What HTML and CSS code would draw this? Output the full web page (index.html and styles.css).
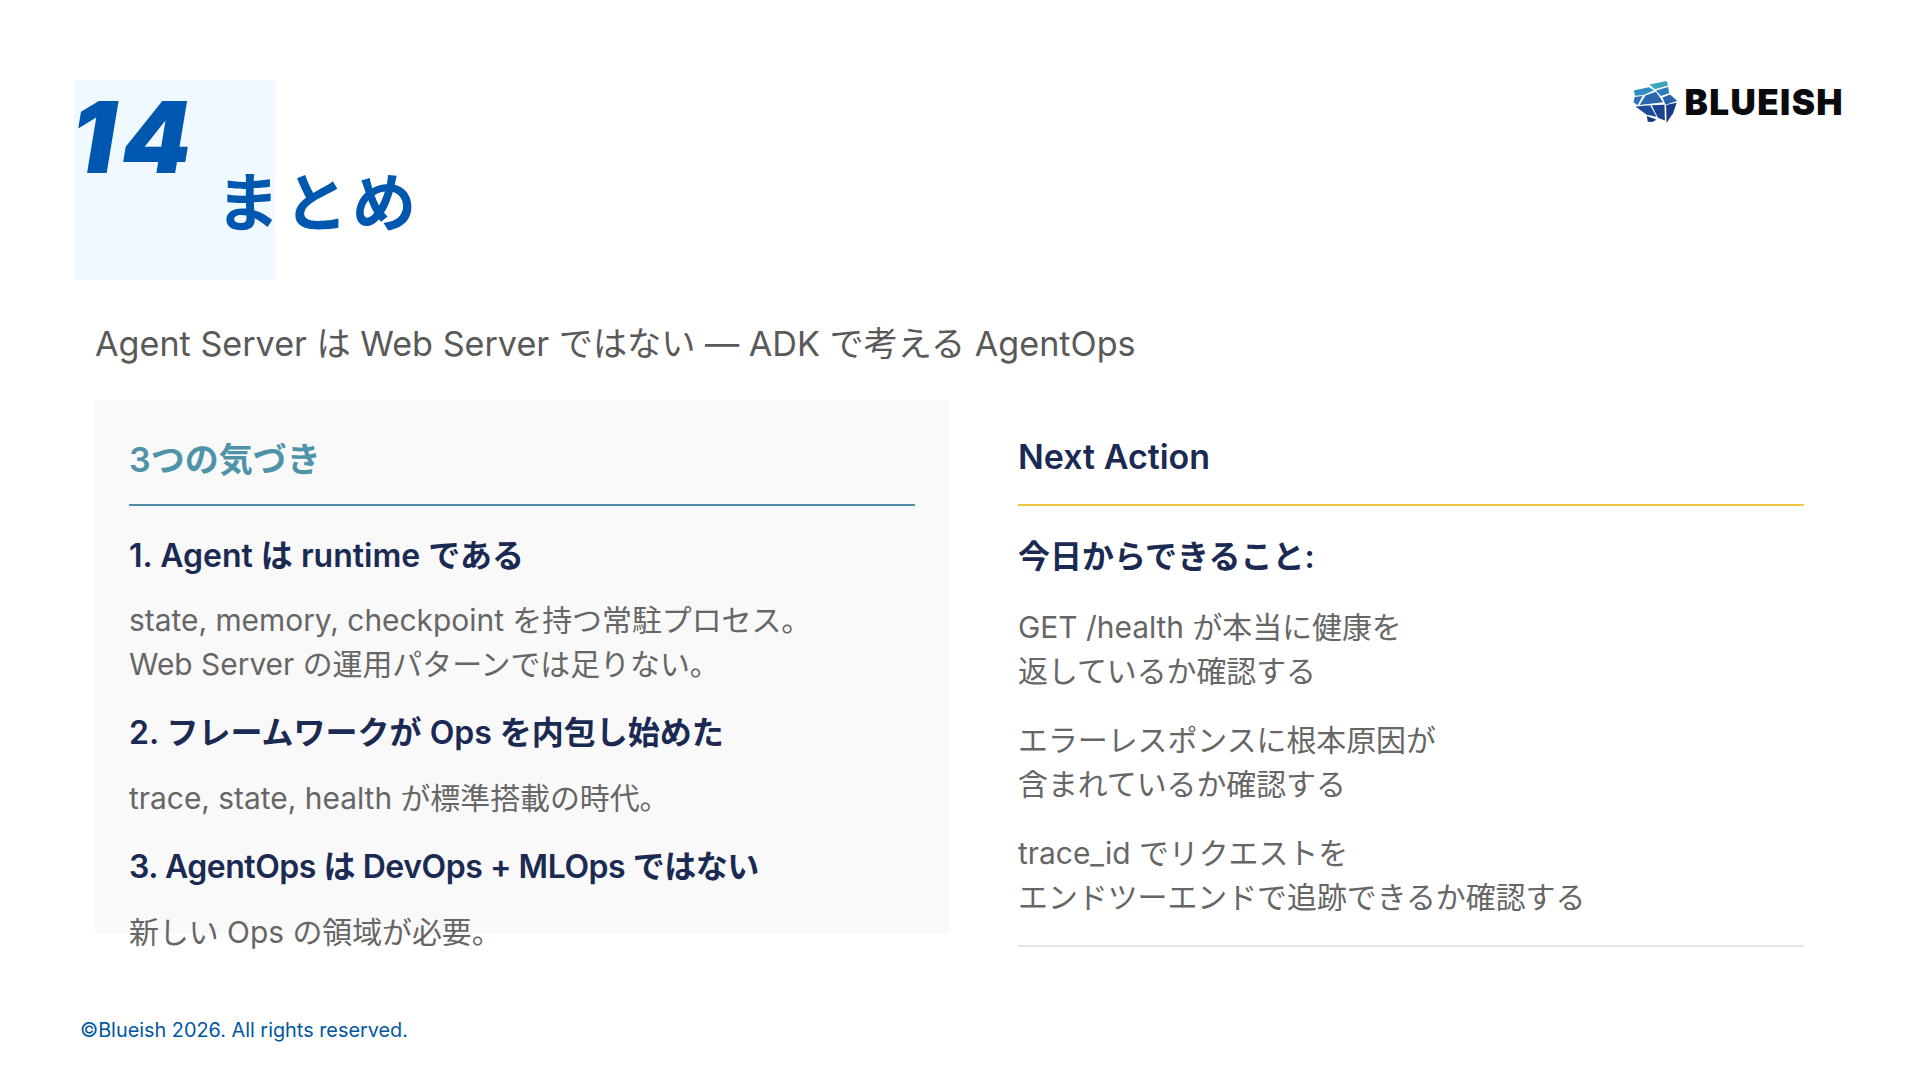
FILE: index.html
```html
<!DOCTYPE html>
<html lang="ja">
<head>
<meta charset="utf-8">
<title>まとめ</title>
<link rel="stylesheet" href="styles.css">
</head>
<body>
<main class="slide">
  <header class="top">
    <div class="badge">
      <div class="num">14</div>
      <h1 class="title">まとめ</h1>
    </div>
    <div class="logo">
      <svg class="mark" viewBox="28 24 134 134" aria-hidden="true">
        <polygon points="78,38 130,27 135,41 95,52" fill="#3aa5bb"/>
        <polygon points="30,56 76,46 93,55 60,70 35,72" fill="#2f8fc4"/>
        <polygon points="98,56 135,45 138,64 113,73" fill="#2b7cbc"/>
        <polygon points="33,76 57,73 42,101 30,92" fill="#2c6fb5"/>
        <polygon points="66,71 98,60 120,92 48,100" fill="#2a66ae"/>
        <polygon points="118,77 141,68 163,88 127,99" fill="#2a62ab"/>
        <polygon points="35,105 80,101 100,136 70,130" fill="#1f4c97"/>
        <polygon points="85,101 124,99 125,147 104,139" fill="#1b4390"/>
        <polygon points="129,100 161,93 150,125 130,155" fill="#183c88"/>
        <polygon points="70,134 100,145 86,152 73,151" fill="#163a85"/>
      </svg>
      <span class="word">BLUEISH</span>
    </div>
  </header>
  <p class="lead">Agent Server は Web Server ではない — ADK で考える AgentOps</p>
  <section class="cols">
    <article class="card">
      <h2 class="card-title">3つの気づき</h2>
      <h3 class="item first">1. Agent は runtime である</h3>
      <p class="body">state, memory, checkpoint を持つ常駐プロセス。<br>Web Server の運用パターンでは足りない。</p>
      <h3 class="item">2. フレームワークが Ops を内包し始めた</h3>
      <p class="body">trace, state, health が標準搭載の時代。</p>
      <h3 class="item tight">3. AgentOps は DevOps + MLOps ではない</h3>
      <p class="body">新しい Ops の領域が必要。</p>
    </article>
    <article class="action">
      <h2 class="action-title">Next Action</h2>
      <h3 class="today">今日からできること:</h3>
      <p class="body step">GET /health が本当に健康を<br>返しているか確認する</p>
      <p class="body step">エラーレスポンスに根本原因が<br>含まれているか確認する</p>
      <p class="body step">trace_id でリクエストを<br>エンドツーエンドで追跡できるか確認する</p>
    </article>
  </section>
  <footer class="foot">©Blueish 2026. All rights reserved.</footer>
</main>
</body>
</html>
```
FILE: styles.css
```css
* { box-sizing: border-box; margin: 0; padding: 0; }
html, body { width: 1920px; height: 1080px; background: #fff; overflow: hidden; }
body { font-family: Inter, "Noto Sans CJK JP", sans-serif; }
.slide { width: 1920px; height: 1080px; padding: 80px 75px 0; display: flex; flex-direction: column; }
.top { display: flex; justify-content: space-between; align-items: flex-start; height: 200px; }
.badge { width: 200px; height: 200px; background: #f0f9ff; color: #0057b0; }
.num { font-size: 99px; line-height: 114px; font-weight: 900; font-style: italic; letter-spacing: 6px; height: 116px; margin-left: -4px; }
.title { font-size: 64px; line-height: 70px; font-weight: 700; letter-spacing: 4px; padding-left: 141px; white-space: nowrap; margin-top: -28px; }
.logo { display: flex; align-items: center; gap: 8px; margin-right: 1px; }
.mark { width: 44px; height: 44px; }
.word { font-size: 35px; font-weight: 900; letter-spacing: 1.4px; color: #0b0b0f; line-height: 44px; }
.lead { margin: 41px 0 0 20px; font-size: 34.16px; line-height: 46px; color: #595959; white-space: nowrap; }
.cols { margin: 33px 0 0 20px; display: flex; gap: 69px; align-items: flex-start; }
.card { width: 854px; height: 534px; background: #f9f9f9; padding: 35px 34px; }
.card-title { font-size: 34px; line-height: 50px; font-weight: 600; height: 71px; border-bottom: 2px solid #4f8fa6; color: #4f93a8; }
.item { font-size: 32px; line-height: 44px; font-weight: 600; color: #1a2a52; margin-top: 25px; white-space: nowrap; }
.item.first { margin-top: 28px; }
.item.tight { letter-spacing: -0.46px; }
.body { font-size: 29.9px; line-height: 44px; color: #666; white-space: nowrap; }
.item + .body { margin-top: 21px; }
.item.first + .body { margin-top: 20px; }
.action { width: 786px; height: 547px; border-bottom: 2px solid #e5e5e5; padding-top: 35px; }
.action-title { font-size: 34px; line-height: 44px; font-weight: 600; color: #1a2a52; height: 71px; border-bottom: 2px solid #f0c840; }
.today { font-size: 32px; line-height: 46px; font-weight: 600; color: #1a2a52; margin-top: 28px; }
.step { margin-top: 25px; }
.foot { margin: auto 0 36px 5px; font-size: 19.85px; line-height: 28px; color: #0057a0; }
```
